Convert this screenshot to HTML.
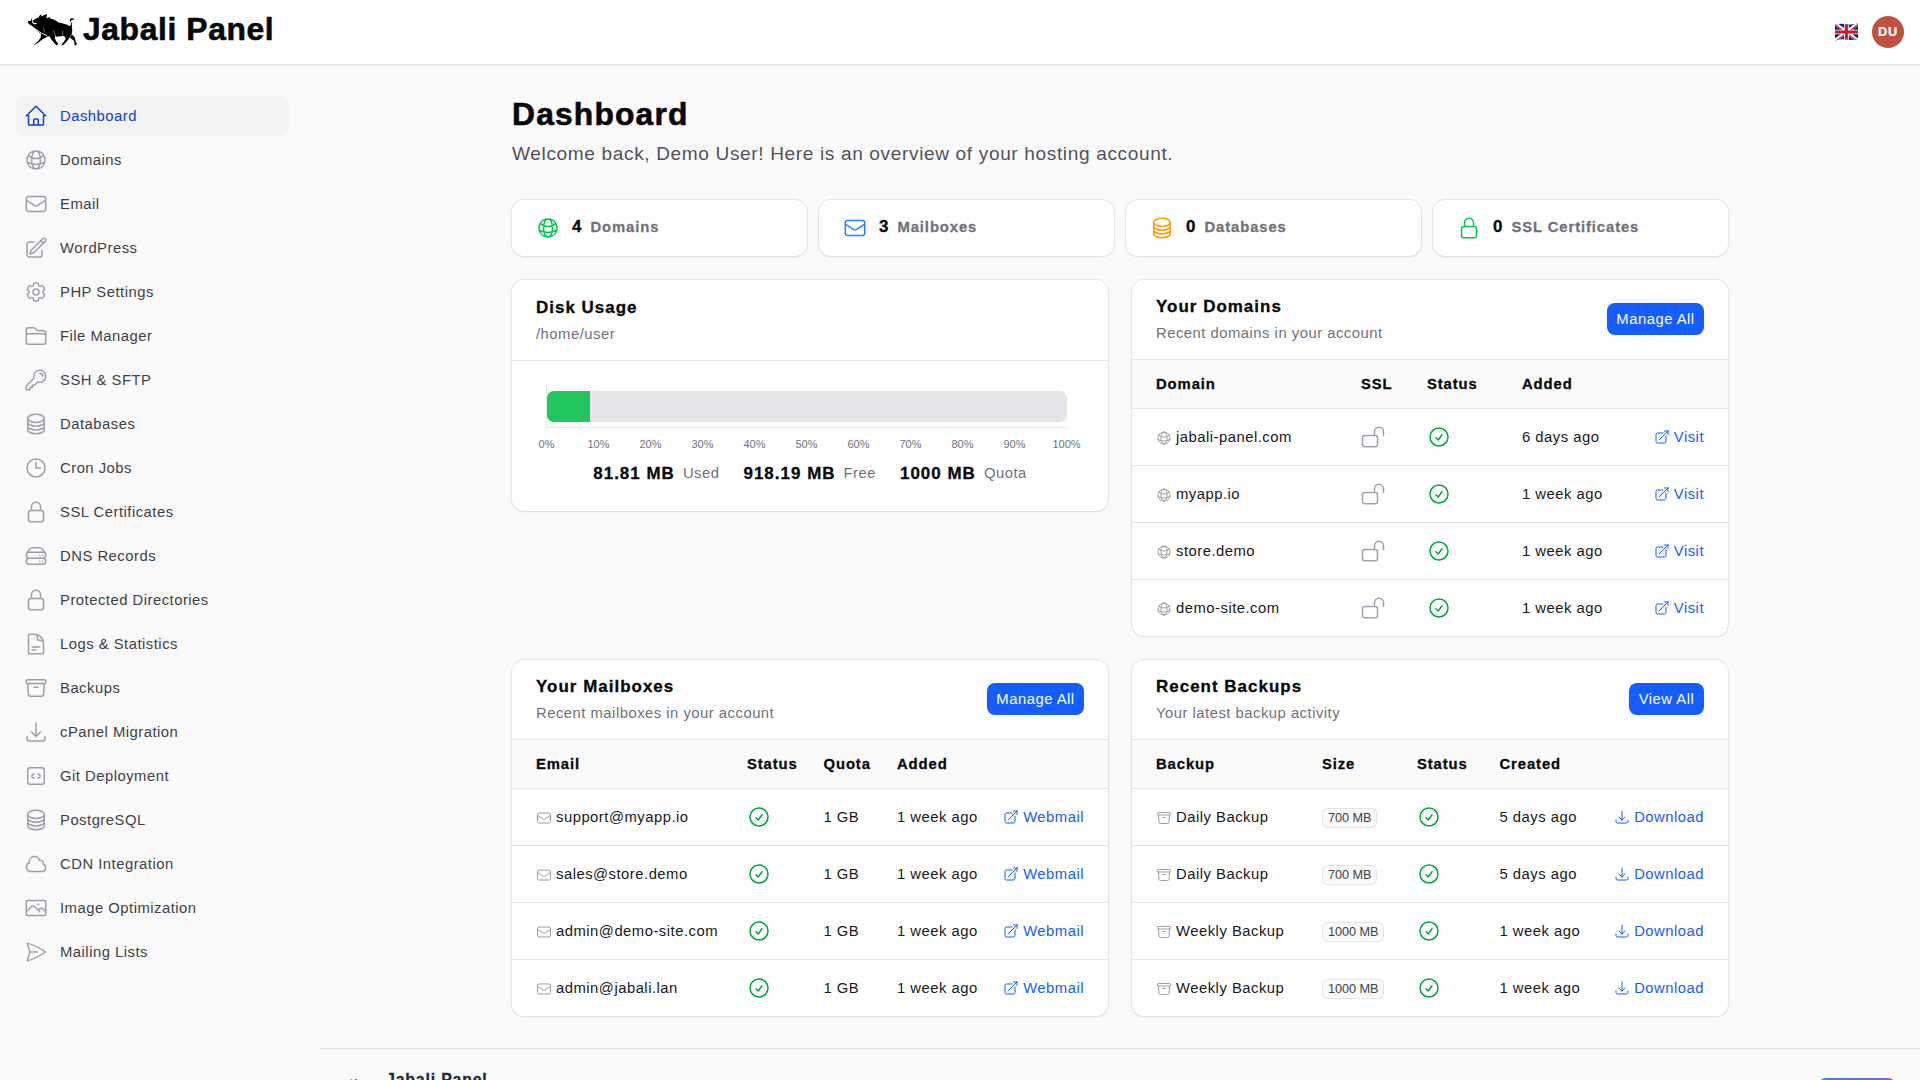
<!DOCTYPE html><html><head><meta charset="utf-8"><style>
:root{--k:1.06;--lsr:0.035;--lsb:0.064;--sk:0.02;--ff:"Liberation Sans";}
*{box-sizing:border-box;margin:0;padding:0}
html,body{width:1920px;height:1080px;overflow:hidden}
body{background:#fafafa;font-family:var(--ff),sans-serif;color:#09090b;position:relative;--fs:14px;--ls:var(--lsr)}
body *{font-size:calc(var(--fs) * var(--k));letter-spacing:calc(var(--fs) * var(--ls) + var(--tr,0px))}
.b{font-weight:700;--ls:var(--lsb);-webkit-text-stroke:calc(var(--fs) * var(--sk,0)) currentColor}
.abs{position:absolute}
.nw{white-space:nowrap}
svg{display:block;overflow:visible}
.ico{fill:none;stroke:currentColor;stroke-linecap:round;stroke-linejoin:round}
#hdr{position:absolute;left:0;top:0;width:1920px;height:65px;background:#fff;border-bottom:1px solid #e4e4e7;box-shadow:0 1px 2px rgba(0,0,0,.03)}
.nav{position:absolute;left:16px;width:273px;height:40px;border-radius:8px;color:#3f3f46}
.nav.act{background:#f3f3f3;color:#0a3de3}
.nav svg{position:absolute;left:8px;top:8px;width:24px;height:24px;color:#9f9fa9}
.nav.act svg{color:#0a3de3}
.nav span{position:absolute;left:44px;top:10px;line-height:20px;white-space:nowrap;--fs:14px}
.card{position:absolute;background:#fff;border-radius:12px;box-shadow:0 0 0 1px rgba(9,9,11,.07),0 1px 3px rgba(0,0,0,.06)}
.t16{--fs:16px;line-height:24px}
.t14{--fs:14px;line-height:20px}
.t12{--fs:12px;line-height:16px}
.g5{color:#71717a}
.btn{position:absolute;height:32px;border-radius:8px;background:#155dfc;color:#fff;--fs:14px;line-height:32px;text-align:center;white-space:nowrap}
.lnk{color:#155dfc}
.lnk svg{color:#155dfc}
</style></head><body>
<div id="hdr">
<svg class="abs" style="left:26px;top:12px" width="54" height="36" viewBox="0 0 54 36"><path fill="#000" d="M2.07 9.1 L3.56 8.9 L4.85 8.7 L5.4 5.96 L5.96 7.8 L7.26 8.37 L10.2 6.5 L12.8 5.2 L13.2 3.9 L15.4 2.07 L15.4 4.5 L17.3 3.6 L20.6 1.9 L20.96 3.9 L19.85 6.5 L22.07 5.4 L24.7 5.2 L23.9 6.5 L27.6 7.6 L31.3 9.5 L32.4 10.6 L35 11 L40.6 12.4 L43.6 13.9 L45 12.8 L45.4 10.6 L43.9 9.1 L43.6 7.6 L45.8 6.1 L48.7 7.26 L46.1 8 L44.7 8.7 L46.1 11.3 L45.8 14.7 L46.3 18.4 L45.8 21 L46.1 22.4 L48.7 25.4 L49.85 29.9 L51 32 L49.85 33.6 L48.7 33.2 L48 28.7 L44.3 26.1 L43.9 24.7 L42.4 27.6 L38 32.4 L35.4 33.7 L36.1 32.07 L39.5 27.6 L39.1 24.7 L36.9 23.9 L30.2 24.7 L29.5 23.2 L28.7 26.1 L30.6 29.9 L32.07 31.3 L31.3 33.6 L29.85 32.8 L26.1 28.4 L23.2 23.9 L21.3 24.7 L16.5 27.3 L12.8 30.2 L7.6 33.6 L8.4 32.4 L12.4 28.7 L14.7 25.4 L15 22.07 L12.07 19.5 L9.85 16.9 L6.15 13.9 L3.56 12.4 L2.07 11 Z"/><g fill="none" stroke="#fff" stroke-linecap="round"><path d="M6.3 8.6 Q6.9 12.4 10.3 11.5" stroke-width="1.1"/><path d="M10.9 17.7 L15.2 21.1 L21 23.7" stroke-width="0.9"/><path d="M27.4 18.6 L29.5 23.8" stroke-width="0.45"/><path d="M36.4 19.2 L37.1 24.3" stroke-width="0.45"/><path d="M17.7 16.2 L18.5 20" stroke-width="0.4"/><path d="M46 22 L44.5 24.6" stroke-width="0.5"/></g></svg>
<div class="abs b nw" style="left:83px;top:11px;--fs:30px;line-height:36px;--tr:-1.3px">Jabali Panel</div>
<svg class="abs" style="left:1835px;top:23px" width="23" height="18" viewBox="0 0 23 18">
<defs><clipPath id="fl"><path d="M0 1.8 Q5 0.2 11.5 1.2 T23 0.2 V16 Q17 17.6 11.5 16.6 T0 17.6 Z"/></clipPath></defs>
<g clip-path="url(#fl)">
<rect width="23" height="18" fill="#0a2a7a"/>
<path d="M0 0.5L23 17.5M23 0.5L0 17.5" stroke="#fff" stroke-width="3.4"/>
<path d="M0 0.5L11.5 9M23 17.5L11.5 9" stroke="#d0102e" stroke-width="1.1" transform="translate(-0.6 0.6)"/>
<path d="M23 0.5L11.5 9M0 17.5L11.5 9" stroke="#d0102e" stroke-width="1.1" transform="translate(0.6 0.6)"/>
<path d="M11.5 0V18M0 9H23" stroke="#fff" stroke-width="4.6"/>
<path d="M11.5 0V18M0 9H23" stroke="#d0102e" stroke-width="2.8"/>
</g></svg>
<div class="abs b" style="left:1872px;top:16px;width:32px;height:32px;border-radius:50%;background:#c0513e;color:#fff;--fs:12px;line-height:32px;text-align:center">DU</div>
</div>
<div class="nav act" style="top:96px"><svg class="ico " style="" viewBox="0 0 24 24" stroke-width="1.5"><path d="m2.25 12 8.954-8.955c.44-.439 1.152-.439 1.591 0L21.75 12M4.5 9.75v10.125c0 .621.504 1.125 1.125 1.125H9.75v-4.875c0-.621.504-1.125 1.125-1.125h2.25c.621 0 1.125.504 1.125 1.125V21h4.125c.621 0 1.125-.504 1.125-1.125V9.75M8.25 21h8.25"/></svg><span>Dashboard</span></div>
<div class="nav" style="top:140px"><svg class="ico " style="" viewBox="0 0 24 24" stroke-width="1.5"><path d="M12 21a9.004 9.004 0 0 0 8.716-6.747M12 21a9.004 9.004 0 0 1-8.716-6.747M12 21c2.485 0 4.5-4.03 4.5-9S14.485 3 12 3m0 18c-2.485 0-4.5-4.03-4.5-9S9.515 3 12 3m0 0a8.997 8.997 0 0 1 7.843 4.582M12 3a8.997 8.997 0 0 0-7.843 4.582m15.686 0A11.953 11.953 0 0 1 12 10.5c-2.998 0-5.74-1.1-7.843-2.918m15.686 0A8.959 8.959 0 0 1 21 12c0 .778-.099 1.533-.284 2.253m0 0A17.919 17.919 0 0 1 12 16.5c-3.162 0-6.133-.815-8.716-2.247m0 0A9.015 9.015 0 0 1 3 12c0-1.605.42-3.113 1.157-4.418"/></svg><span>Domains</span></div>
<div class="nav" style="top:184px"><svg class="ico " style="" viewBox="0 0 24 24" stroke-width="1.5"><path d="M21.75 6.75v10.5a2.25 2.25 0 0 1-2.25 2.25h-15a2.25 2.25 0 0 1-2.25-2.25V6.75m19.5 0A2.25 2.25 0 0 0 19.5 4.5h-15a2.25 2.25 0 0 0-2.25 2.25m19.5 0v.243a2.25 2.25 0 0 1-1.07 1.916l-7.5 4.615a2.25 2.25 0 0 1-2.36 0L3.32 8.91a2.25 2.25 0 0 1-1.07-1.916V6.75"/></svg><span>Email</span></div>
<div class="nav" style="top:228px"><svg class="ico " style="" viewBox="0 0 24 24" stroke-width="1.5"><path d="m16.862 4.487 1.687-1.688a1.875 1.875 0 1 1 2.652 2.652L10.582 16.07a4.5 4.5 0 0 1-1.897 1.13L6 18l.8-2.685a4.5 4.5 0 0 1 1.13-1.897l8.932-8.931Zm0 0L19.5 7.125M18 14v4.75A2.25 2.25 0 0 1 15.75 21H5.25A2.25 2.25 0 0 1 3 18.75V8.25A2.25 2.25 0 0 1 5.25 6H10"/></svg><span>WordPress</span></div>
<div class="nav" style="top:272px"><svg class="ico " style="" viewBox="0 0 24 24" stroke-width="1.5"><path d="M9.594 3.94c.09-.542.56-.94 1.11-.94h2.593c.55 0 1.02.398 1.11.94l.213 1.281c.063.374.313.686.645.87.074.04.147.083.22.127.325.196.72.257 1.075.124l1.217-.456a1.125 1.125 0 0 1 1.37.49l1.296 2.247a1.125 1.125 0 0 1-.26 1.431l-1.003.827c-.293.241-.438.613-.43.992a7.723 7.723 0 0 1 0 .255c-.008.378.137.75.43.991l1.004.827c.424.35.534.955.26 1.43l-1.298 2.247a1.125 1.125 0 0 1-1.369.491l-1.217-.456c-.355-.133-.75-.072-1.076.124a6.47 6.47 0 0 1-.22.128c-.331.183-.581.495-.644.869l-.213 1.281c-.09.543-.56.94-1.11.94h-2.594c-.55 0-1.019-.398-1.11-.94l-.213-1.281c-.062-.374-.312-.686-.644-.87a6.52 6.52 0 0 1-.22-.127c-.325-.196-.72-.257-1.076-.124l-1.217.456a1.125 1.125 0 0 1-1.369-.49l-1.297-2.247a1.125 1.125 0 0 1 .26-1.431l1.004-.827c.292-.24.437-.613.43-.991a6.932 6.932 0 0 1 0-.255c.007-.38-.138-.751-.43-.992l-1.004-.827a1.125 1.125 0 0 1-.26-1.43l1.297-2.247a1.125 1.125 0 0 1 1.37-.491l1.216.456c.356.133.751.072 1.076-.124.072-.044.146-.086.22-.128.332-.183.582-.495.644-.869l.214-1.28ZM15 12a3 3 0 1 1-6 0 3 3 0 0 1 6 0Z"/></svg><span>PHP Settings</span></div>
<div class="nav" style="top:316px"><svg class="ico " style="" viewBox="0 0 24 24" stroke-width="1.5"><path d="M2.25 12.75V12A2.25 2.25 0 0 1 4.5 9.75h15A2.25 2.25 0 0 1 21.75 12v.75m-8.69-6.44-2.12-2.12a1.5 1.5 0 0 0-1.061-.44H4.5A2.25 2.25 0 0 0 2.25 6v12a2.25 2.25 0 0 0 2.25 2.25h15A2.25 2.25 0 0 0 21.75 18V9a2.25 2.25 0 0 0-2.25-2.25h-5.379a1.5 1.5 0 0 1-1.06-.44Z"/></svg><span>File Manager</span></div>
<div class="nav" style="top:360px"><svg class="ico " style="" viewBox="0 0 24 24" stroke-width="1.5"><path d="M15.75 5.25a3 3 0 0 1 3 3m3 0a6 6 0 0 1-7.029 5.912c-.563-.097-1.159.026-1.563.43L10.5 17.25H8.25v2.25H6v2.25H2.25v-2.818c0-.597.237-1.17.659-1.591l6.499-6.499c.404-.404.527-1 .43-1.563A6 6 0 1 1 21.75 8.25Z"/></svg><span>SSH &amp; SFTP</span></div>
<div class="nav" style="top:404px"><svg class="ico " style="" viewBox="0 0 24 24" stroke-width="1.5"><path d="M20.25 6.375c0 2.278-3.694 4.125-8.25 4.125S3.75 8.653 3.75 6.375m16.5 0c0-2.278-3.694-4.125-8.25-4.125S3.75 4.097 3.75 6.375m16.5 0v11.25c0 2.278-3.694 4.125-8.25 4.125s-8.25-1.847-8.25-4.125V6.375m16.5 0v3.75m-16.5-3.75v3.75m16.5 0v3.75C20.25 16.153 16.556 18 12 18s-8.25-1.847-8.25-4.125v-3.75m16.5 0c0 2.278-3.694 4.125-8.25 4.125s-8.25-1.847-8.25-4.125"/></svg><span>Databases</span></div>
<div class="nav" style="top:448px"><svg class="ico " style="" viewBox="0 0 24 24" stroke-width="1.5"><path d="M12 6v6h4.5m4.5 0a9 9 0 1 1-18 0 9 9 0 0 1 18 0Z"/></svg><span>Cron Jobs</span></div>
<div class="nav" style="top:492px"><svg class="ico " style="" viewBox="0 0 24 24" stroke-width="1.5"><path d="M16.5 10.5V6.75a4.5 4.5 0 1 0-9 0v3.75m-.75 11.25h10.5a2.25 2.25 0 0 0 2.25-2.25v-6.75a2.25 2.25 0 0 0-2.25-2.25H6.75a2.25 2.25 0 0 0-2.25 2.25v6.75a2.25 2.25 0 0 0 2.25 2.25Z"/></svg><span>SSL Certificates</span></div>
<div class="nav" style="top:536px"><svg class="ico " style="" viewBox="0 0 24 24" stroke-width="1.5"><path d="M5.25 14.25h13.5m-13.5 0a3 3 0 0 1-3-3m3 3a3 3 0 1 0 0 6h13.5a3 3 0 1 0 0-6m-16.5-3a3 3 0 0 1 3-3h13.5a3 3 0 0 1 3 3m-19.5 0a4.5 4.5 0 0 1 .9-2.7L5.737 5.1a3.375 3.375 0 0 1 2.7-1.35h7.126c1.062 0 2.062.5 2.7 1.35l2.587 3.45a4.5 4.5 0 0 1 .9 2.7m0 0a3 3 0 0 1-3 3m0 3h.008v.008h-.008v-.008Zm0-6h.008v.008h-.008v-.008Zm-3 6h.008v.008h-.008v-.008Zm0-6h.008v.008h-.008v-.008Z"/></svg><span>DNS Records</span></div>
<div class="nav" style="top:580px"><svg class="ico " style="" viewBox="0 0 24 24" stroke-width="1.5"><path d="M16.5 10.5V6.75a4.5 4.5 0 1 0-9 0v3.75m-.75 11.25h10.5a2.25 2.25 0 0 0 2.25-2.25v-6.75a2.25 2.25 0 0 0-2.25-2.25H6.75a2.25 2.25 0 0 0-2.25 2.25v6.75a2.25 2.25 0 0 0 2.25 2.25Z"/></svg><span>Protected Directories</span></div>
<div class="nav" style="top:624px"><svg class="ico " style="" viewBox="0 0 24 24" stroke-width="1.5"><path d="M19.5 14.25v-2.625a3.375 3.375 0 0 0-3.375-3.375h-1.5A1.125 1.125 0 0 1 13.5 7.125v-1.5a3.375 3.375 0 0 0-3.375-3.375H8.25m0 12.75h7.5m-7.5 3H12M10.5 2.25H5.625c-.621 0-1.125.504-1.125 1.125v17.25c0 .621.504 1.125 1.125 1.125h12.75c.621 0 1.125-.504 1.125-1.125V11.25a9 9 0 0 0-9-9Z"/></svg><span>Logs &amp; Statistics</span></div>
<div class="nav" style="top:668px"><svg class="ico " style="" viewBox="0 0 24 24" stroke-width="1.5"><path d="m20.25 7.5-.625 10.632a2.25 2.25 0 0 1-2.247 2.118H6.622a2.25 2.25 0 0 1-2.247-2.118L3.75 7.5M10 11.25h4M3.375 7.5h17.25c.621 0 1.125-.504 1.125-1.125v-1.5c0-.621-.504-1.125-1.125-1.125H3.375c-.621 0-1.125.504-1.125 1.125v1.5c0 .621.504 1.125 1.125 1.125Z"/></svg><span>Backups</span></div>
<div class="nav" style="top:712px"><svg class="ico " style="" viewBox="0 0 24 24" stroke-width="1.5"><path d="M3 16.5v2.25A2.25 2.25 0 0 0 5.25 21h13.5A2.25 2.25 0 0 0 21 18.75V16.5M16.5 12 12 16.5m0 0L7.5 12m4.5 4.5V3"/></svg><span>cPanel Migration</span></div>
<div class="nav" style="top:756px"><svg class="ico " style="" viewBox="0 0 24 24" stroke-width="1.5"><path d="M14.25 9.75 16.5 12l-2.25 2.25m-4.5 0L7.5 12l2.25-2.25M6 20.25h12A2.25 2.25 0 0 0 20.25 18V6A2.25 2.25 0 0 0 18 3.75H6A2.25 2.25 0 0 0 3.75 6v12A2.25 2.25 0 0 0 6 20.25Z"/></svg><span>Git Deployment</span></div>
<div class="nav" style="top:800px"><svg class="ico " style="" viewBox="0 0 24 24" stroke-width="1.5"><path d="M20.25 6.375c0 2.278-3.694 4.125-8.25 4.125S3.75 8.653 3.75 6.375m16.5 0c0-2.278-3.694-4.125-8.25-4.125S3.75 4.097 3.75 6.375m16.5 0v11.25c0 2.278-3.694 4.125-8.25 4.125s-8.25-1.847-8.25-4.125V6.375m16.5 0v3.75m-16.5-3.75v3.75m16.5 0v3.75C20.25 16.153 16.556 18 12 18s-8.25-1.847-8.25-4.125v-3.75m16.5 0c0 2.278-3.694 4.125-8.25 4.125s-8.25-1.847-8.25-4.125"/></svg><span>PostgreSQL</span></div>
<div class="nav" style="top:844px"><svg class="ico " style="" viewBox="0 0 24 24" stroke-width="1.5"><path d="M2.25 15a4.5 4.5 0 0 0 4.5 4.5H18a3.75 3.75 0 0 0 1.332-7.257 3 3 0 0 0-3.758-3.848 5.25 5.25 0 0 0-10.233 2.33A4.502 4.502 0 0 0 2.25 15Z"/></svg><span>CDN Integration</span></div>
<div class="nav" style="top:888px"><svg class="ico " style="" viewBox="0 0 24 24" stroke-width="1.5"><path d="m2.25 15.75 5.159-5.159a2.25 2.25 0 0 1 3.182 0l5.159 5.159m-1.5-1.5 1.409-1.409a2.25 2.25 0 0 1 3.182 0l2.909 2.909m-18 3.75h16.5a1.5 1.5 0 0 0 1.5-1.5V6a1.5 1.5 0 0 0-1.5-1.5H3.75A1.5 1.5 0 0 0 2.25 6v12a1.5 1.5 0 0 0 1.5 1.5Zm10.5-11.25h.008v.008h-.008V8.25Zm.375 0a.375.375 0 1 1-.75 0 .375.375 0 0 1 .75 0Z"/></svg><span>Image Optimization</span></div>
<div class="nav" style="top:932px"><svg class="ico " style="" viewBox="0 0 24 24" stroke-width="1.5"><path d="M6 12 3.269 3.125A59.769 59.769 0 0 1 21.485 12 59.768 59.768 0 0 1 3.27 20.875L5.999 12Zm0 0h7.5"/></svg><span>Mailing Lists</span></div>
<div class="abs b nw" style="left:512px;top:96px;--fs:30px;line-height:36px;--tr:-0.75px">Dashboard</div>
<div class="abs nw" style="left:512px;top:140px;--fs:18px;line-height:28px;color:#52525b">Welcome back, Demo User! Here is an overview of your hosting account.</div>
<div class="card" style="left:512px;top:200px;width:295px;height:56px">
<div class="abs" style="left:24px;top:16px;width:24px;height:24px;color:#00c950"><svg class="ico " style="" viewBox="0 0 24 24" stroke-width="1.5"><path d="M12 21a9.004 9.004 0 0 0 8.716-6.747M12 21a9.004 9.004 0 0 1-8.716-6.747M12 21c2.485 0 4.5-4.03 4.5-9S14.485 3 12 3m0 18c-2.485 0-4.5-4.03-4.5-9S9.515 3 12 3m0 0a8.997 8.997 0 0 1 7.843 4.582M12 3a8.997 8.997 0 0 0-7.843 4.582m15.686 0A11.953 11.953 0 0 1 12 10.5c-2.998 0-5.74-1.1-7.843-2.918m15.686 0A8.959 8.959 0 0 1 21 12c0 .778-.099 1.533-.284 2.253m0 0A17.919 17.919 0 0 1 12 16.5c-3.162 0-6.133-.815-8.716-2.247m0 0A9.015 9.015 0 0 1 3 12c0-1.605.42-3.113 1.157-4.418"/></svg></div>
<div class="abs nw" style="left:60px;top:15px;display:flex;align-items:baseline;gap:8px"><span class="b t16">4</span><span class="b t14 g5">Domains</span></div>
</div>
<div class="card" style="left:819px;top:200px;width:295px;height:56px">
<div class="abs" style="left:24px;top:16px;width:24px;height:24px;color:#2b7fff"><svg class="ico " style="" viewBox="0 0 24 24" stroke-width="1.5"><path d="M21.75 6.75v10.5a2.25 2.25 0 0 1-2.25 2.25h-15a2.25 2.25 0 0 1-2.25-2.25V6.75m19.5 0A2.25 2.25 0 0 0 19.5 4.5h-15a2.25 2.25 0 0 0-2.25 2.25m19.5 0v.243a2.25 2.25 0 0 1-1.07 1.916l-7.5 4.615a2.25 2.25 0 0 1-2.36 0L3.32 8.91a2.25 2.25 0 0 1-1.07-1.916V6.75"/></svg></div>
<div class="abs nw" style="left:60px;top:15px;display:flex;align-items:baseline;gap:8px"><span class="b t16">3</span><span class="b t14 g5">Mailboxes</span></div>
</div>
<div class="card" style="left:1126px;top:200px;width:295px;height:56px">
<div class="abs" style="left:24px;top:16px;width:24px;height:24px;color:#fe9a00"><svg class="ico " style="" viewBox="0 0 24 24" stroke-width="1.5"><path d="M20.25 6.375c0 2.278-3.694 4.125-8.25 4.125S3.75 8.653 3.75 6.375m16.5 0c0-2.278-3.694-4.125-8.25-4.125S3.75 4.097 3.75 6.375m16.5 0v11.25c0 2.278-3.694 4.125-8.25 4.125s-8.25-1.847-8.25-4.125V6.375m16.5 0v3.75m-16.5-3.75v3.75m16.5 0v3.75C20.25 16.153 16.556 18 12 18s-8.25-1.847-8.25-4.125v-3.75m16.5 0c0 2.278-3.694 4.125-8.25 4.125s-8.25-1.847-8.25-4.125"/></svg></div>
<div class="abs nw" style="left:60px;top:15px;display:flex;align-items:baseline;gap:8px"><span class="b t16">0</span><span class="b t14 g5">Databases</span></div>
</div>
<div class="card" style="left:1433px;top:200px;width:295px;height:56px">
<div class="abs" style="left:24px;top:16px;width:24px;height:24px;color:#00c950"><svg class="ico " style="" viewBox="0 0 24 24" stroke-width="1.5"><path d="M16.5 10.5V6.75a4.5 4.5 0 1 0-9 0v3.75m-.75 11.25h10.5a2.25 2.25 0 0 0 2.25-2.25v-6.75a2.25 2.25 0 0 0-2.25-2.25H6.75a2.25 2.25 0 0 0-2.25 2.25v6.75a2.25 2.25 0 0 0 2.25 2.25Z"/></svg></div>
<div class="abs nw" style="left:60px;top:15px;display:flex;align-items:baseline;gap:8px"><span class="b t16">0</span><span class="b t14 g5">SSL Certificates</span></div>
</div>
<div class="card" style="left:512px;top:280px;width:596px;height:231px;overflow:hidden">
<div class="abs b t16 nw" style="left:24px;top:16px">Disk Usage</div>
<div class="abs t14 nw g5" style="left:24px;top:44px">/home/user</div>
<div class="abs" style="left:0;top:80px;width:596px;height:1px;background:#e4e4e7"></div>
<div class="abs" style="left:34px;top:105px;width:1px;height:43px;background:#e5e7eb"></div>
<div class="abs" style="left:34px;top:147px;width:521px;height:1px;background:#e5e7eb"></div>
<div class="abs" style="left:35px;top:111px;width:520px;height:31px;border-radius:7px;background:#e4e6ea;overflow:hidden"><div style="width:42.5px;height:31px;background:#22c55e"></div></div>
<div class="abs" style="left:4.5px;top:157px;width:60px;text-align:center;font-family:'Liberation Sans',sans-serif;font-size:11px;letter-spacing:0;line-height:14px;color:#6b7280">0%</div>
<div class="abs" style="left:56.5px;top:157px;width:60px;text-align:center;font-family:'Liberation Sans',sans-serif;font-size:11px;letter-spacing:0;line-height:14px;color:#6b7280">10%</div>
<div class="abs" style="left:108.5px;top:157px;width:60px;text-align:center;font-family:'Liberation Sans',sans-serif;font-size:11px;letter-spacing:0;line-height:14px;color:#6b7280">20%</div>
<div class="abs" style="left:160.5px;top:157px;width:60px;text-align:center;font-family:'Liberation Sans',sans-serif;font-size:11px;letter-spacing:0;line-height:14px;color:#6b7280">30%</div>
<div class="abs" style="left:212.5px;top:157px;width:60px;text-align:center;font-family:'Liberation Sans',sans-serif;font-size:11px;letter-spacing:0;line-height:14px;color:#6b7280">40%</div>
<div class="abs" style="left:264.5px;top:157px;width:60px;text-align:center;font-family:'Liberation Sans',sans-serif;font-size:11px;letter-spacing:0;line-height:14px;color:#6b7280">50%</div>
<div class="abs" style="left:316.5px;top:157px;width:60px;text-align:center;font-family:'Liberation Sans',sans-serif;font-size:11px;letter-spacing:0;line-height:14px;color:#6b7280">60%</div>
<div class="abs" style="left:368.5px;top:157px;width:60px;text-align:center;font-family:'Liberation Sans',sans-serif;font-size:11px;letter-spacing:0;line-height:14px;color:#6b7280">70%</div>
<div class="abs" style="left:420.5px;top:157px;width:60px;text-align:center;font-family:'Liberation Sans',sans-serif;font-size:11px;letter-spacing:0;line-height:14px;color:#6b7280">80%</div>
<div class="abs" style="left:472.5px;top:157px;width:60px;text-align:center;font-family:'Liberation Sans',sans-serif;font-size:11px;letter-spacing:0;line-height:14px;color:#6b7280">90%</div>
<div class="abs" style="left:524.5px;top:157px;width:60px;text-align:center;font-family:'Liberation Sans',sans-serif;font-size:11px;letter-spacing:0;line-height:14px;color:#6b7280">100%</div>
<div class="abs nw" style="left:0;top:182px;width:596px;display:flex;justify-content:center;align-items:flex-start;gap:24px">
<div style="display:flex;align-items:flex-start;gap:8px"><span class="b t16">81.81 MB</span><span class="t14 g5" style="margin-top:1px">Used</span></div>
<div style="display:flex;align-items:flex-start;gap:8px"><span class="b t16">918.19 MB</span><span class="t14 g5" style="margin-top:1px">Free</span></div>
<div style="display:flex;align-items:flex-start;gap:8px"><span class="b t16">1000 MB</span><span class="t14 g5" style="margin-top:1px">Quota</span></div>
</div>
</div>
<div class="card" style="left:1132px;top:280px;width:596px;height:356px;overflow:hidden">
<div class="abs b t16 nw" style="left:24px;top:15px">Your Domains</div>
<div class="abs t14 nw g5" style="left:24px;top:43px">Recent domains in your account</div>
<div class="btn" style="right:24px;top:23px;width:97px">Manage All</div>
<div class="abs" style="left:0;top:79px;width:596px;height:1px;background:#e4e4e7"></div>
<div class="abs" style="left:0;top:80px;width:596px;height:49px;background:#fafafa;border-bottom:1px solid #e4e4e7"></div>
<div class="abs b t14 nw" style="left:24px;top:94px">Domain</div>
<div class="abs b t14 nw" style="left:229px;top:94px">SSL</div>
<div class="abs b t14 nw" style="left:295px;top:94px">Status</div>
<div class="abs b t14 nw" style="left:390px;top:94px">Added</div>
<div class="abs" style="left:0;top:129px;width:596px;height:56px">
<div class="abs" style="left:24px;top:21px;width:16px;height:16px;color:#9f9fa9"><svg class="ico " style="" viewBox="0 0 24 24" stroke-width="1.5"><path d="M12 21a9.004 9.004 0 0 0 8.716-6.747M12 21a9.004 9.004 0 0 1-8.716-6.747M12 21c2.485 0 4.5-4.03 4.5-9S14.485 3 12 3m0 18c-2.485 0-4.5-4.03-4.5-9S9.515 3 12 3m0 0a8.997 8.997 0 0 1 7.843 4.582M12 3a8.997 8.997 0 0 0-7.843 4.582m15.686 0A11.953 11.953 0 0 1 12 10.5c-2.998 0-5.74-1.1-7.843-2.918m15.686 0A8.959 8.959 0 0 1 21 12c0 .778-.099 1.533-.284 2.253m0 0A17.919 17.919 0 0 1 12 16.5c-3.162 0-6.133-.815-8.716-2.247m0 0A9.015 9.015 0 0 1 3 12c0-1.605.42-3.113 1.157-4.418"/></svg></div>
<div class="abs t14 nw" style="left:44px;top:18px;color:#18181b">jabali-panel.com</div>
<div class="abs" style="left:229px;top:16px;width:24px;height:24px;color:#9ca3af"><svg class="ico " style="" viewBox="0 0 24 24" stroke-width="1.5"><path d="M13.5 10.5V6.75a4.5 4.5 0 1 1 9 0v3.75M3.75 21.75h10.5a2.25 2.25 0 0 0 2.25-2.25v-6.75a2.25 2.25 0 0 0-2.25-2.25H3.75a2.25 2.25 0 0 0-2.25 2.25v6.75a2.25 2.25 0 0 0 2.25 2.25Z"/></svg></div>
<div class="abs" style="left:295px;top:16px;width:24px;height:24px;color:#00a63e"><svg class="ico " style="" viewBox="0 0 24 24" stroke-width="1.5"><path d="M9 12.75 11.25 15 15 9.75M21 12a9 9 0 1 1-18 0 9 9 0 0 1 18 0Z"/></svg></div>
<div class="abs t14 nw" style="left:390px;top:18px;color:#18181b">6 days ago</div>
<div class="abs lnk t14 nw" style="right:24px;top:18px;display:flex;align-items:center;gap:4px"><div style="width:16px;height:16px"><svg class="ico " style="" viewBox="0 0 24 24" stroke-width="1.5"><path d="M13.5 6H5.25A2.25 2.25 0 0 0 3 8.25v10.5A2.25 2.25 0 0 0 5.25 21h10.5A2.25 2.25 0 0 0 18 18.75V10.5m-10.5 6L21 3m0 0h-5.25M21 3v5.25"/></svg></div><span>Visit</span></div>
</div>
<div class="abs" style="left:0;top:185px;width:596px;height:1px;background:#e4e4e7"></div>
<div class="abs" style="left:0;top:186px;width:596px;height:56px">
<div class="abs" style="left:24px;top:21px;width:16px;height:16px;color:#9f9fa9"><svg class="ico " style="" viewBox="0 0 24 24" stroke-width="1.5"><path d="M12 21a9.004 9.004 0 0 0 8.716-6.747M12 21a9.004 9.004 0 0 1-8.716-6.747M12 21c2.485 0 4.5-4.03 4.5-9S14.485 3 12 3m0 18c-2.485 0-4.5-4.03-4.5-9S9.515 3 12 3m0 0a8.997 8.997 0 0 1 7.843 4.582M12 3a8.997 8.997 0 0 0-7.843 4.582m15.686 0A11.953 11.953 0 0 1 12 10.5c-2.998 0-5.74-1.1-7.843-2.918m15.686 0A8.959 8.959 0 0 1 21 12c0 .778-.099 1.533-.284 2.253m0 0A17.919 17.919 0 0 1 12 16.5c-3.162 0-6.133-.815-8.716-2.247m0 0A9.015 9.015 0 0 1 3 12c0-1.605.42-3.113 1.157-4.418"/></svg></div>
<div class="abs t14 nw" style="left:44px;top:18px;color:#18181b">myapp.io</div>
<div class="abs" style="left:229px;top:16px;width:24px;height:24px;color:#9ca3af"><svg class="ico " style="" viewBox="0 0 24 24" stroke-width="1.5"><path d="M13.5 10.5V6.75a4.5 4.5 0 1 1 9 0v3.75M3.75 21.75h10.5a2.25 2.25 0 0 0 2.25-2.25v-6.75a2.25 2.25 0 0 0-2.25-2.25H3.75a2.25 2.25 0 0 0-2.25 2.25v6.75a2.25 2.25 0 0 0 2.25 2.25Z"/></svg></div>
<div class="abs" style="left:295px;top:16px;width:24px;height:24px;color:#00a63e"><svg class="ico " style="" viewBox="0 0 24 24" stroke-width="1.5"><path d="M9 12.75 11.25 15 15 9.75M21 12a9 9 0 1 1-18 0 9 9 0 0 1 18 0Z"/></svg></div>
<div class="abs t14 nw" style="left:390px;top:18px;color:#18181b">1 week ago</div>
<div class="abs lnk t14 nw" style="right:24px;top:18px;display:flex;align-items:center;gap:4px"><div style="width:16px;height:16px"><svg class="ico " style="" viewBox="0 0 24 24" stroke-width="1.5"><path d="M13.5 6H5.25A2.25 2.25 0 0 0 3 8.25v10.5A2.25 2.25 0 0 0 5.25 21h10.5A2.25 2.25 0 0 0 18 18.75V10.5m-10.5 6L21 3m0 0h-5.25M21 3v5.25"/></svg></div><span>Visit</span></div>
</div>
<div class="abs" style="left:0;top:242px;width:596px;height:1px;background:#e4e4e7"></div>
<div class="abs" style="left:0;top:243px;width:596px;height:56px">
<div class="abs" style="left:24px;top:21px;width:16px;height:16px;color:#9f9fa9"><svg class="ico " style="" viewBox="0 0 24 24" stroke-width="1.5"><path d="M12 21a9.004 9.004 0 0 0 8.716-6.747M12 21a9.004 9.004 0 0 1-8.716-6.747M12 21c2.485 0 4.5-4.03 4.5-9S14.485 3 12 3m0 18c-2.485 0-4.5-4.03-4.5-9S9.515 3 12 3m0 0a8.997 8.997 0 0 1 7.843 4.582M12 3a8.997 8.997 0 0 0-7.843 4.582m15.686 0A11.953 11.953 0 0 1 12 10.5c-2.998 0-5.74-1.1-7.843-2.918m15.686 0A8.959 8.959 0 0 1 21 12c0 .778-.099 1.533-.284 2.253m0 0A17.919 17.919 0 0 1 12 16.5c-3.162 0-6.133-.815-8.716-2.247m0 0A9.015 9.015 0 0 1 3 12c0-1.605.42-3.113 1.157-4.418"/></svg></div>
<div class="abs t14 nw" style="left:44px;top:18px;color:#18181b">store.demo</div>
<div class="abs" style="left:229px;top:16px;width:24px;height:24px;color:#9ca3af"><svg class="ico " style="" viewBox="0 0 24 24" stroke-width="1.5"><path d="M13.5 10.5V6.75a4.5 4.5 0 1 1 9 0v3.75M3.75 21.75h10.5a2.25 2.25 0 0 0 2.25-2.25v-6.75a2.25 2.25 0 0 0-2.25-2.25H3.75a2.25 2.25 0 0 0-2.25 2.25v6.75a2.25 2.25 0 0 0 2.25 2.25Z"/></svg></div>
<div class="abs" style="left:295px;top:16px;width:24px;height:24px;color:#00a63e"><svg class="ico " style="" viewBox="0 0 24 24" stroke-width="1.5"><path d="M9 12.75 11.25 15 15 9.75M21 12a9 9 0 1 1-18 0 9 9 0 0 1 18 0Z"/></svg></div>
<div class="abs t14 nw" style="left:390px;top:18px;color:#18181b">1 week ago</div>
<div class="abs lnk t14 nw" style="right:24px;top:18px;display:flex;align-items:center;gap:4px"><div style="width:16px;height:16px"><svg class="ico " style="" viewBox="0 0 24 24" stroke-width="1.5"><path d="M13.5 6H5.25A2.25 2.25 0 0 0 3 8.25v10.5A2.25 2.25 0 0 0 5.25 21h10.5A2.25 2.25 0 0 0 18 18.75V10.5m-10.5 6L21 3m0 0h-5.25M21 3v5.25"/></svg></div><span>Visit</span></div>
</div>
<div class="abs" style="left:0;top:299px;width:596px;height:1px;background:#e4e4e7"></div>
<div class="abs" style="left:0;top:300px;width:596px;height:56px">
<div class="abs" style="left:24px;top:21px;width:16px;height:16px;color:#9f9fa9"><svg class="ico " style="" viewBox="0 0 24 24" stroke-width="1.5"><path d="M12 21a9.004 9.004 0 0 0 8.716-6.747M12 21a9.004 9.004 0 0 1-8.716-6.747M12 21c2.485 0 4.5-4.03 4.5-9S14.485 3 12 3m0 18c-2.485 0-4.5-4.03-4.5-9S9.515 3 12 3m0 0a8.997 8.997 0 0 1 7.843 4.582M12 3a8.997 8.997 0 0 0-7.843 4.582m15.686 0A11.953 11.953 0 0 1 12 10.5c-2.998 0-5.74-1.1-7.843-2.918m15.686 0A8.959 8.959 0 0 1 21 12c0 .778-.099 1.533-.284 2.253m0 0A17.919 17.919 0 0 1 12 16.5c-3.162 0-6.133-.815-8.716-2.247m0 0A9.015 9.015 0 0 1 3 12c0-1.605.42-3.113 1.157-4.418"/></svg></div>
<div class="abs t14 nw" style="left:44px;top:18px;color:#18181b">demo-site.com</div>
<div class="abs" style="left:229px;top:16px;width:24px;height:24px;color:#9ca3af"><svg class="ico " style="" viewBox="0 0 24 24" stroke-width="1.5"><path d="M13.5 10.5V6.75a4.5 4.5 0 1 1 9 0v3.75M3.75 21.75h10.5a2.25 2.25 0 0 0 2.25-2.25v-6.75a2.25 2.25 0 0 0-2.25-2.25H3.75a2.25 2.25 0 0 0-2.25 2.25v6.75a2.25 2.25 0 0 0 2.25 2.25Z"/></svg></div>
<div class="abs" style="left:295px;top:16px;width:24px;height:24px;color:#00a63e"><svg class="ico " style="" viewBox="0 0 24 24" stroke-width="1.5"><path d="M9 12.75 11.25 15 15 9.75M21 12a9 9 0 1 1-18 0 9 9 0 0 1 18 0Z"/></svg></div>
<div class="abs t14 nw" style="left:390px;top:18px;color:#18181b">1 week ago</div>
<div class="abs lnk t14 nw" style="right:24px;top:18px;display:flex;align-items:center;gap:4px"><div style="width:16px;height:16px"><svg class="ico " style="" viewBox="0 0 24 24" stroke-width="1.5"><path d="M13.5 6H5.25A2.25 2.25 0 0 0 3 8.25v10.5A2.25 2.25 0 0 0 5.25 21h10.5A2.25 2.25 0 0 0 18 18.75V10.5m-10.5 6L21 3m0 0h-5.25M21 3v5.25"/></svg></div><span>Visit</span></div>
</div>
</div>
<div class="card" style="left:512px;top:660px;width:596px;height:356px;overflow:hidden">
<div class="abs b t16 nw" style="left:24px;top:15px">Your Mailboxes</div>
<div class="abs t14 nw g5" style="left:24px;top:43px">Recent mailboxes in your account</div>
<div class="btn" style="right:24px;top:23px;width:97px">Manage All</div>
<div class="abs" style="left:0;top:79px;width:596px;height:1px;background:#e4e4e7"></div>
<div class="abs" style="left:0;top:80px;width:596px;height:49px;background:#fafafa;border-bottom:1px solid #e4e4e7"></div>
<div class="abs b t14 nw" style="left:24px;top:94px">Email</div>
<div class="abs b t14 nw" style="left:235px;top:94px">Status</div>
<div class="abs b t14 nw" style="left:311.5px;top:94px">Quota</div>
<div class="abs b t14 nw" style="left:385px;top:94px">Added</div>
<div class="abs" style="left:0;top:129px;width:596px;height:56px">
<div class="abs" style="left:24px;top:21px;width:16px;height:16px;color:#9f9fa9"><svg class="ico " style="" viewBox="0 0 24 24" stroke-width="1.5"><path d="M21.75 6.75v10.5a2.25 2.25 0 0 1-2.25 2.25h-15a2.25 2.25 0 0 1-2.25-2.25V6.75m19.5 0A2.25 2.25 0 0 0 19.5 4.5h-15a2.25 2.25 0 0 0-2.25 2.25m19.5 0v.243a2.25 2.25 0 0 1-1.07 1.916l-7.5 4.615a2.25 2.25 0 0 1-2.36 0L3.32 8.91a2.25 2.25 0 0 1-1.07-1.916V6.75"/></svg></div>
<div class="abs t14 nw" style="left:44px;top:18px;color:#18181b">support@myapp.io</div>
<div class="abs" style="left:235px;top:16px;width:24px;height:24px;color:#00a63e"><svg class="ico " style="" viewBox="0 0 24 24" stroke-width="1.5"><path d="M9 12.75 11.25 15 15 9.75M21 12a9 9 0 1 1-18 0 9 9 0 0 1 18 0Z"/></svg></div>
<div class="abs t14 nw" style="left:311.5px;top:18px;color:#18181b">1 GB</div>
<div class="abs t14 nw" style="left:385px;top:18px;color:#18181b">1 week ago</div>
<div class="abs lnk t14 nw" style="right:24px;top:18px;display:flex;align-items:center;gap:4px"><div style="width:16px;height:16px"><svg class="ico " style="" viewBox="0 0 24 24" stroke-width="1.5"><path d="M13.5 6H5.25A2.25 2.25 0 0 0 3 8.25v10.5A2.25 2.25 0 0 0 5.25 21h10.5A2.25 2.25 0 0 0 18 18.75V10.5m-10.5 6L21 3m0 0h-5.25M21 3v5.25"/></svg></div><span>Webmail</span></div>
</div>
<div class="abs" style="left:0;top:185px;width:596px;height:1px;background:#e4e4e7"></div>
<div class="abs" style="left:0;top:186px;width:596px;height:56px">
<div class="abs" style="left:24px;top:21px;width:16px;height:16px;color:#9f9fa9"><svg class="ico " style="" viewBox="0 0 24 24" stroke-width="1.5"><path d="M21.75 6.75v10.5a2.25 2.25 0 0 1-2.25 2.25h-15a2.25 2.25 0 0 1-2.25-2.25V6.75m19.5 0A2.25 2.25 0 0 0 19.5 4.5h-15a2.25 2.25 0 0 0-2.25 2.25m19.5 0v.243a2.25 2.25 0 0 1-1.07 1.916l-7.5 4.615a2.25 2.25 0 0 1-2.36 0L3.32 8.91a2.25 2.25 0 0 1-1.07-1.916V6.75"/></svg></div>
<div class="abs t14 nw" style="left:44px;top:18px;color:#18181b">sales@store.demo</div>
<div class="abs" style="left:235px;top:16px;width:24px;height:24px;color:#00a63e"><svg class="ico " style="" viewBox="0 0 24 24" stroke-width="1.5"><path d="M9 12.75 11.25 15 15 9.75M21 12a9 9 0 1 1-18 0 9 9 0 0 1 18 0Z"/></svg></div>
<div class="abs t14 nw" style="left:311.5px;top:18px;color:#18181b">1 GB</div>
<div class="abs t14 nw" style="left:385px;top:18px;color:#18181b">1 week ago</div>
<div class="abs lnk t14 nw" style="right:24px;top:18px;display:flex;align-items:center;gap:4px"><div style="width:16px;height:16px"><svg class="ico " style="" viewBox="0 0 24 24" stroke-width="1.5"><path d="M13.5 6H5.25A2.25 2.25 0 0 0 3 8.25v10.5A2.25 2.25 0 0 0 5.25 21h10.5A2.25 2.25 0 0 0 18 18.75V10.5m-10.5 6L21 3m0 0h-5.25M21 3v5.25"/></svg></div><span>Webmail</span></div>
</div>
<div class="abs" style="left:0;top:242px;width:596px;height:1px;background:#e4e4e7"></div>
<div class="abs" style="left:0;top:243px;width:596px;height:56px">
<div class="abs" style="left:24px;top:21px;width:16px;height:16px;color:#9f9fa9"><svg class="ico " style="" viewBox="0 0 24 24" stroke-width="1.5"><path d="M21.75 6.75v10.5a2.25 2.25 0 0 1-2.25 2.25h-15a2.25 2.25 0 0 1-2.25-2.25V6.75m19.5 0A2.25 2.25 0 0 0 19.5 4.5h-15a2.25 2.25 0 0 0-2.25 2.25m19.5 0v.243a2.25 2.25 0 0 1-1.07 1.916l-7.5 4.615a2.25 2.25 0 0 1-2.36 0L3.32 8.91a2.25 2.25 0 0 1-1.07-1.916V6.75"/></svg></div>
<div class="abs t14 nw" style="left:44px;top:18px;color:#18181b">admin@demo-site.com</div>
<div class="abs" style="left:235px;top:16px;width:24px;height:24px;color:#00a63e"><svg class="ico " style="" viewBox="0 0 24 24" stroke-width="1.5"><path d="M9 12.75 11.25 15 15 9.75M21 12a9 9 0 1 1-18 0 9 9 0 0 1 18 0Z"/></svg></div>
<div class="abs t14 nw" style="left:311.5px;top:18px;color:#18181b">1 GB</div>
<div class="abs t14 nw" style="left:385px;top:18px;color:#18181b">1 week ago</div>
<div class="abs lnk t14 nw" style="right:24px;top:18px;display:flex;align-items:center;gap:4px"><div style="width:16px;height:16px"><svg class="ico " style="" viewBox="0 0 24 24" stroke-width="1.5"><path d="M13.5 6H5.25A2.25 2.25 0 0 0 3 8.25v10.5A2.25 2.25 0 0 0 5.25 21h10.5A2.25 2.25 0 0 0 18 18.75V10.5m-10.5 6L21 3m0 0h-5.25M21 3v5.25"/></svg></div><span>Webmail</span></div>
</div>
<div class="abs" style="left:0;top:299px;width:596px;height:1px;background:#e4e4e7"></div>
<div class="abs" style="left:0;top:300px;width:596px;height:56px">
<div class="abs" style="left:24px;top:21px;width:16px;height:16px;color:#9f9fa9"><svg class="ico " style="" viewBox="0 0 24 24" stroke-width="1.5"><path d="M21.75 6.75v10.5a2.25 2.25 0 0 1-2.25 2.25h-15a2.25 2.25 0 0 1-2.25-2.25V6.75m19.5 0A2.25 2.25 0 0 0 19.5 4.5h-15a2.25 2.25 0 0 0-2.25 2.25m19.5 0v.243a2.25 2.25 0 0 1-1.07 1.916l-7.5 4.615a2.25 2.25 0 0 1-2.36 0L3.32 8.91a2.25 2.25 0 0 1-1.07-1.916V6.75"/></svg></div>
<div class="abs t14 nw" style="left:44px;top:18px;color:#18181b">admin@jabali.lan</div>
<div class="abs" style="left:235px;top:16px;width:24px;height:24px;color:#00a63e"><svg class="ico " style="" viewBox="0 0 24 24" stroke-width="1.5"><path d="M9 12.75 11.25 15 15 9.75M21 12a9 9 0 1 1-18 0 9 9 0 0 1 18 0Z"/></svg></div>
<div class="abs t14 nw" style="left:311.5px;top:18px;color:#18181b">1 GB</div>
<div class="abs t14 nw" style="left:385px;top:18px;color:#18181b">1 week ago</div>
<div class="abs lnk t14 nw" style="right:24px;top:18px;display:flex;align-items:center;gap:4px"><div style="width:16px;height:16px"><svg class="ico " style="" viewBox="0 0 24 24" stroke-width="1.5"><path d="M13.5 6H5.25A2.25 2.25 0 0 0 3 8.25v10.5A2.25 2.25 0 0 0 5.25 21h10.5A2.25 2.25 0 0 0 18 18.75V10.5m-10.5 6L21 3m0 0h-5.25M21 3v5.25"/></svg></div><span>Webmail</span></div>
</div>
</div>
<div class="card" style="left:1132px;top:660px;width:596px;height:356px;overflow:hidden">
<div class="abs b t16 nw" style="left:24px;top:15px">Recent Backups</div>
<div class="abs t14 nw g5" style="left:24px;top:43px">Your latest backup activity</div>
<div class="btn" style="right:24px;top:23px;width:75px">View All</div>
<div class="abs" style="left:0;top:79px;width:596px;height:1px;background:#e4e4e7"></div>
<div class="abs" style="left:0;top:80px;width:596px;height:49px;background:#fafafa;border-bottom:1px solid #e4e4e7"></div>
<div class="abs b t14 nw" style="left:24px;top:94px">Backup</div>
<div class="abs b t14 nw" style="left:190px;top:94px">Size</div>
<div class="abs b t14 nw" style="left:285px;top:94px">Status</div>
<div class="abs b t14 nw" style="left:367.5px;top:94px">Created</div>
<div class="abs" style="left:0;top:129px;width:596px;height:56px">
<div class="abs" style="left:24px;top:21px;width:16px;height:16px;color:#9f9fa9"><svg class="ico " style="" viewBox="0 0 24 24" stroke-width="1.5"><path d="m20.25 7.5-.625 10.632a2.25 2.25 0 0 1-2.247 2.118H6.622a2.25 2.25 0 0 1-2.247-2.118L3.75 7.5M10 11.25h4M3.375 7.5h17.25c.621 0 1.125-.504 1.125-1.125v-1.5c0-.621-.504-1.125-1.125-1.125H3.375c-.621 0-1.125.504-1.125 1.125v1.5c0 .621.504 1.125 1.125 1.125Z"/></svg></div>
<div class="abs t14 nw" style="left:44px;top:18px;color:#18181b">Daily Backup</div>
<div class="abs t12 nw" style="left:190px;top:19px;height:20px;padding:1px 6px;--tr:-0.5px;border-radius:6px;background:#fafafa;box-shadow:inset 0 0 0 1px #e4e4e7;color:#3f3f46;line-height:18px">700 MB</div>
<div class="abs" style="left:285px;top:16px;width:24px;height:24px;color:#00a63e"><svg class="ico " style="" viewBox="0 0 24 24" stroke-width="1.5"><path d="M9 12.75 11.25 15 15 9.75M21 12a9 9 0 1 1-18 0 9 9 0 0 1 18 0Z"/></svg></div>
<div class="abs t14 nw" style="left:367.5px;top:18px;color:#18181b">5 days ago</div>
<div class="abs lnk t14 nw" style="right:24px;top:18px;display:flex;align-items:center;gap:4px"><div style="width:16px;height:16px"><svg class="ico " style="" viewBox="0 0 24 24" stroke-width="1.5"><path d="M3 16.5v2.25A2.25 2.25 0 0 0 5.25 21h13.5A2.25 2.25 0 0 0 21 18.75V16.5M16.5 12 12 16.5m0 0L7.5 12m4.5 4.5V3"/></svg></div><span>Download</span></div>
</div>
<div class="abs" style="left:0;top:185px;width:596px;height:1px;background:#e4e4e7"></div>
<div class="abs" style="left:0;top:186px;width:596px;height:56px">
<div class="abs" style="left:24px;top:21px;width:16px;height:16px;color:#9f9fa9"><svg class="ico " style="" viewBox="0 0 24 24" stroke-width="1.5"><path d="m20.25 7.5-.625 10.632a2.25 2.25 0 0 1-2.247 2.118H6.622a2.25 2.25 0 0 1-2.247-2.118L3.75 7.5M10 11.25h4M3.375 7.5h17.25c.621 0 1.125-.504 1.125-1.125v-1.5c0-.621-.504-1.125-1.125-1.125H3.375c-.621 0-1.125.504-1.125 1.125v1.5c0 .621.504 1.125 1.125 1.125Z"/></svg></div>
<div class="abs t14 nw" style="left:44px;top:18px;color:#18181b">Daily Backup</div>
<div class="abs t12 nw" style="left:190px;top:19px;height:20px;padding:1px 6px;--tr:-0.5px;border-radius:6px;background:#fafafa;box-shadow:inset 0 0 0 1px #e4e4e7;color:#3f3f46;line-height:18px">700 MB</div>
<div class="abs" style="left:285px;top:16px;width:24px;height:24px;color:#00a63e"><svg class="ico " style="" viewBox="0 0 24 24" stroke-width="1.5"><path d="M9 12.75 11.25 15 15 9.75M21 12a9 9 0 1 1-18 0 9 9 0 0 1 18 0Z"/></svg></div>
<div class="abs t14 nw" style="left:367.5px;top:18px;color:#18181b">5 days ago</div>
<div class="abs lnk t14 nw" style="right:24px;top:18px;display:flex;align-items:center;gap:4px"><div style="width:16px;height:16px"><svg class="ico " style="" viewBox="0 0 24 24" stroke-width="1.5"><path d="M3 16.5v2.25A2.25 2.25 0 0 0 5.25 21h13.5A2.25 2.25 0 0 0 21 18.75V16.5M16.5 12 12 16.5m0 0L7.5 12m4.5 4.5V3"/></svg></div><span>Download</span></div>
</div>
<div class="abs" style="left:0;top:242px;width:596px;height:1px;background:#e4e4e7"></div>
<div class="abs" style="left:0;top:243px;width:596px;height:56px">
<div class="abs" style="left:24px;top:21px;width:16px;height:16px;color:#9f9fa9"><svg class="ico " style="" viewBox="0 0 24 24" stroke-width="1.5"><path d="m20.25 7.5-.625 10.632a2.25 2.25 0 0 1-2.247 2.118H6.622a2.25 2.25 0 0 1-2.247-2.118L3.75 7.5M10 11.25h4M3.375 7.5h17.25c.621 0 1.125-.504 1.125-1.125v-1.5c0-.621-.504-1.125-1.125-1.125H3.375c-.621 0-1.125.504-1.125 1.125v1.5c0 .621.504 1.125 1.125 1.125Z"/></svg></div>
<div class="abs t14 nw" style="left:44px;top:18px;color:#18181b">Weekly Backup</div>
<div class="abs t12 nw" style="left:190px;top:19px;height:20px;padding:1px 6px;--tr:-0.5px;border-radius:6px;background:#fafafa;box-shadow:inset 0 0 0 1px #e4e4e7;color:#3f3f46;line-height:18px">1000 MB</div>
<div class="abs" style="left:285px;top:16px;width:24px;height:24px;color:#00a63e"><svg class="ico " style="" viewBox="0 0 24 24" stroke-width="1.5"><path d="M9 12.75 11.25 15 15 9.75M21 12a9 9 0 1 1-18 0 9 9 0 0 1 18 0Z"/></svg></div>
<div class="abs t14 nw" style="left:367.5px;top:18px;color:#18181b">1 week ago</div>
<div class="abs lnk t14 nw" style="right:24px;top:18px;display:flex;align-items:center;gap:4px"><div style="width:16px;height:16px"><svg class="ico " style="" viewBox="0 0 24 24" stroke-width="1.5"><path d="M3 16.5v2.25A2.25 2.25 0 0 0 5.25 21h13.5A2.25 2.25 0 0 0 21 18.75V16.5M16.5 12 12 16.5m0 0L7.5 12m4.5 4.5V3"/></svg></div><span>Download</span></div>
</div>
<div class="abs" style="left:0;top:299px;width:596px;height:1px;background:#e4e4e7"></div>
<div class="abs" style="left:0;top:300px;width:596px;height:56px">
<div class="abs" style="left:24px;top:21px;width:16px;height:16px;color:#9f9fa9"><svg class="ico " style="" viewBox="0 0 24 24" stroke-width="1.5"><path d="m20.25 7.5-.625 10.632a2.25 2.25 0 0 1-2.247 2.118H6.622a2.25 2.25 0 0 1-2.247-2.118L3.75 7.5M10 11.25h4M3.375 7.5h17.25c.621 0 1.125-.504 1.125-1.125v-1.5c0-.621-.504-1.125-1.125-1.125H3.375c-.621 0-1.125.504-1.125 1.125v1.5c0 .621.504 1.125 1.125 1.125Z"/></svg></div>
<div class="abs t14 nw" style="left:44px;top:18px;color:#18181b">Weekly Backup</div>
<div class="abs t12 nw" style="left:190px;top:19px;height:20px;padding:1px 6px;--tr:-0.5px;border-radius:6px;background:#fafafa;box-shadow:inset 0 0 0 1px #e4e4e7;color:#3f3f46;line-height:18px">1000 MB</div>
<div class="abs" style="left:285px;top:16px;width:24px;height:24px;color:#00a63e"><svg class="ico " style="" viewBox="0 0 24 24" stroke-width="1.5"><path d="M9 12.75 11.25 15 15 9.75M21 12a9 9 0 1 1-18 0 9 9 0 0 1 18 0Z"/></svg></div>
<div class="abs t14 nw" style="left:367.5px;top:18px;color:#18181b">1 week ago</div>
<div class="abs lnk t14 nw" style="right:24px;top:18px;display:flex;align-items:center;gap:4px"><div style="width:16px;height:16px"><svg class="ico " style="" viewBox="0 0 24 24" stroke-width="1.5"><path d="M3 16.5v2.25A2.25 2.25 0 0 0 5.25 21h13.5A2.25 2.25 0 0 0 21 18.75V16.5M16.5 12 12 16.5m0 0L7.5 12m4.5 4.5V3"/></svg></div><span>Download</span></div>
</div>
</div>
<div class="abs" style="left:320px;top:1048px;width:1600px;height:1px;background:#e4e4e7"></div>
<svg class="abs" style="left:336px;top:1077px" width="54" height="36" viewBox="0 0 54 36"><path fill="#000" d="M2.07 9.1 L3.56 8.9 L4.85 8.7 L5.4 5.96 L5.96 7.8 L7.26 8.37 L10.2 6.5 L12.8 5.2 L13.2 3.9 L15.4 2.07 L15.4 4.5 L17.3 3.6 L20.6 1.9 L20.96 3.9 L19.85 6.5 L22.07 5.4 L24.7 5.2 L23.9 6.5 L27.6 7.6 L31.3 9.5 L32.4 10.6 L35 11 L40.6 12.4 L43.6 13.9 L45 12.8 L45.4 10.6 L43.9 9.1 L43.6 7.6 L45.8 6.1 L48.7 7.26 L46.1 8 L44.7 8.7 L46.1 11.3 L45.8 14.7 L46.3 18.4 L45.8 21 L46.1 22.4 L48.7 25.4 L49.85 29.9 L51 32 L49.85 33.6 L48.7 33.2 L48 28.7 L44.3 26.1 L43.9 24.7 L42.4 27.6 L38 32.4 L35.4 33.7 L36.1 32.07 L39.5 27.6 L39.1 24.7 L36.9 23.9 L30.2 24.7 L29.5 23.2 L28.7 26.1 L30.6 29.9 L32.07 31.3 L31.3 33.6 L29.85 32.8 L26.1 28.4 L23.2 23.9 L21.3 24.7 L16.5 27.3 L12.8 30.2 L7.6 33.6 L8.4 32.4 L12.4 28.7 L14.7 25.4 L15 22.07 L12.07 19.5 L9.85 16.9 L6.15 13.9 L3.56 12.4 L2.07 11 Z"/></svg>
<div class="abs b nw" style="left:386px;top:1068px;--fs:15px;line-height:24px;color:#1e293b;--tr:-0.15px">Jabali Panel</div>
<div class="abs" style="left:1818px;top:1078px;width:78px;height:40px;border-radius:8px;background:linear-gradient(90deg,#3b82f6,#8b5cf6)"></div>
</body></html>
